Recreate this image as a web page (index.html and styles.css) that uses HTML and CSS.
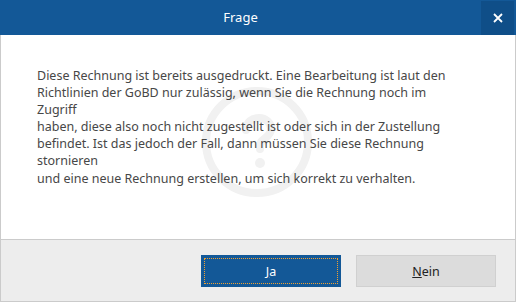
FILE: index.html
```html
<!DOCTYPE html>
<html lang="de">
<head>
    <meta charset="UTF-8">
    <title>Frage</title>
    <link rel="stylesheet" href="styles.css">
</head>
<body>
    <div class="dialog">
        <!-- Titelleiste -->
        <div class="title-bar">
            <div class="title">Frage</div>
            <div class="close-btn">
                <svg width="10" height="10" viewBox="0 0 10 10">
                    <path d="M1 1 L9 9 M9 1 L1 9" stroke="#fff" stroke-width="1.8"/>
                </svg>
            </div>
        </div>

        <!-- Nachricht -->
        <div class="content">
            <svg class="watermark" width="112" height="112" viewBox="0 0 112 112">
                <circle cx="56" cy="56" r="51" fill="none" stroke="#f1f1f1" stroke-width="8"/>
                <path d="M45 44 C45 36 51 32 58 32 C65 32 70 37 70 43 C70 50 63 52 60 56 C59 58 59 60 59 63" fill="none" stroke="#f1f1f1" stroke-width="8" stroke-linecap="round"/>
                <circle cx="59" cy="77" r="5" fill="#f1f1f1"/>
            </svg>
            <p class="message">
                Diese Rechnung ist bereits ausgedruckt. Eine Bearbeitung ist laut den<br>
                Richtlinien der GoBD nur zulässig, wenn Sie die Rechnung noch im<br>
                Zugriff<br>
                haben, diese also noch nicht zugestellt ist oder sich in der Zustellung<br>
                befindet. Ist das jedoch der Fall, dann müssen Sie diese Rechnung<br>
                stornieren<br>
                und eine neue Rechnung erstellen, um sich korrekt zu verhalten.
            </p>
        </div>

        <!-- Buttons -->
        <div class="footer">
            <button class="btn btn-primary"><span class="focus"><u>J</u>a</span></button>
            <button class="btn"><u>N</u>ein</button>
        </div>
    </div>
</body>
</html>
```

FILE: styles.css
```css
body {
    margin: 0;
    padding: 0;
    font-family: "Noto Sans", "Open Sans", sans-serif;
    background-color: #fff;
}

.dialog {
    width: 516px;
    height: 302px;
    display: flex;
    flex-direction: column;
    box-sizing: border-box;
}

/* Titelleiste */
.title-bar {
    height: 35px;
    background-color: #135897;
    display: flex;
    align-items: stretch;
    flex-shrink: 0;
}

.title {
    flex: 1;
    color: #fff;
    font-size: 13px;
    text-align: center;
    line-height: 35px;
}

.close-btn {
    width: 33px;
    height: 34px;
    margin-right: 2px;
    margin-top: 1px;
    background-color: #0f4e88;
    display: flex;
    align-items: center;
    justify-content: center;
}

/* Nachricht */
.content {
    flex: 1;
    position: relative;
    border-left: 1px solid #cbcbcb;
    border-right: 1px solid #cbcbcb;
    padding: 32px 36px 0 36px;
}

.watermark {
    position: absolute;
    left: 200px;
    top: 51px;
}

.message {
    position: relative;
    margin: 0;
    font-size: 12.5px;
    line-height: 17.1px;
    color: #474747;
    white-space: nowrap;
}

/* Buttons */
.footer {
    height: 63px;
    flex-shrink: 0;
    background-color: #ededed;
    border: 1px solid #cbcbcb;
    display: flex;
    justify-content: flex-end;
    align-items: flex-start;
    gap: 15px;
    padding: 15px 19px 0 0;
    box-sizing: border-box;
}

.btn {
    width: 140px;
    height: 32px;
    padding: 0;
    font-family: "Noto Sans", "Open Sans", sans-serif;
    font-size: 12.5px;
    color: #222;
    background-color: #dcdcdc;
    border: 1px solid #d0d0d0;
}

.btn-primary {
    background-color: #135897;
    border-color: #135897;
    color: #fff;
    padding: 2px;
}

.btn-primary .focus {
    display: flex;
    align-items: center;
    justify-content: center;
    height: 100%;
    border: 1px dotted #f0a030;
    box-sizing: border-box;
}
```
